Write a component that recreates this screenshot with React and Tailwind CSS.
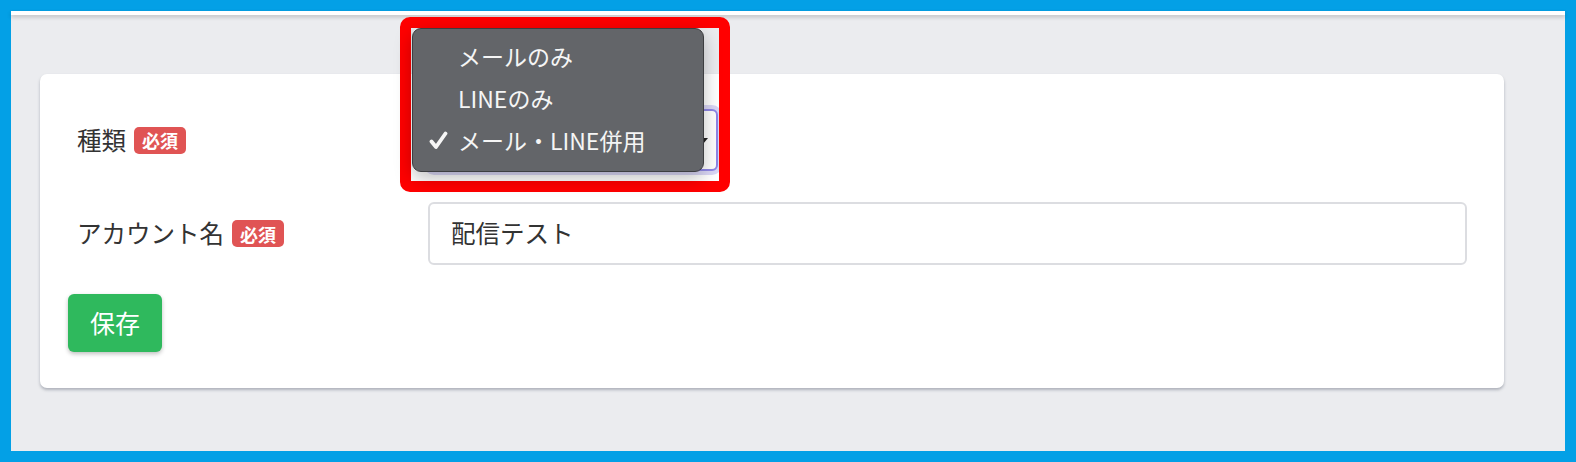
import React from 'react';

const font = { fontFamily: '"Noto Sans CJK JP", "Noto Sans", sans-serif' };

function Badge() {
  return (
    <span className="ml-[8px] inline-flex h-[27px] items-center rounded-[5px] bg-[#e05454] px-[8px] text-[18px] font-bold leading-none text-white">
      必須
    </span>
  );
}

function Dropdown() {
  const items = ['メールのみ', 'LINEのみ', 'メール・LINE併用'];
  return (
    <div className="absolute left-[412px] top-[28px] w-[292px] h-[144px] rounded-[9px] border border-[#3d3e41] bg-[#636569] pt-[6px] shadow-[0_6px_18px_rgba(0,0,0,0.25)]">
      {items.map((t, i) => (
        <div key={t} className="relative flex h-[42px] items-center pl-[45px] text-[23px] text-[#f5f5f5]">
          {i === 2 && (
            <svg className="absolute left-[16px] top-[12px]" width="19" height="19" viewBox="0 0 19 19">
              <path d="M2.5 10.5 L7 16 L16.5 2.5" fill="none" stroke="#f6f6f6" strokeWidth="3.8" strokeLinecap="round" strokeLinejoin="round" />
            </svg>
          )}
          {t}
        </div>
      ))}
    </div>
  );
}

export default function App() {
  return (
    <div className="relative h-[462px] w-[1576px] border-[11px] border-[#03a0e6] bg-[#ebecef] text-[#333]" style={font}>
      <div className="h-[4px] bg-white shadow-[0_2px_4px_rgba(0,0,0,0.2)]" />
      <div className="pl-[29px] pr-[61px] pt-[59px]">
        <div className="rounded-[7px] bg-white pl-[28px] pr-[37px] pt-[35px] pb-[36px] shadow-[0_2px_3px_rgba(60,70,90,0.35)]">
          <div className="flex items-center">
            <div className="flex w-[360px] items-center pl-[9px] text-[24.5px] text-[#333]">
              種類<Badge />
            </div>
            <div className="relative h-[62px] w-[290px] rounded-[6px] border-2 border-[#8f87e6] bg-white shadow-[0_0_0_4px_rgba(150,140,230,0.35)]">
              <span className="absolute right-[8px] top-[27px] h-0 w-0 border-x-[5px] border-t-[6px] border-x-transparent border-t-[#222]" />
            </div>
          </div>
          <div className="mt-[31px] flex items-center">
            <div className="flex w-[360px] items-center pl-[9px] text-[24.5px] text-[#333]">
              アカウント名<Badge />
            </div>
            <div className="flex h-[63px] flex-1 items-center rounded-[6px] border-2 border-[#dcdde1] px-[21px] text-[24.5px] text-[#333]">
              配信テスト
            </div>
          </div>
          <button className="mt-[29px] flex h-[58px] w-[94px] items-center justify-center rounded-[6px] bg-[#2fb95d] text-[25px] text-white shadow-[0_2px_4px_rgba(0,0,0,0.25)]">
            保存
          </button>
        </div>
      </div>
      <div className="pointer-events-none absolute left-[389px] top-[6px] h-[175px] w-[330px] rounded-[10px] border-[11px] border-[#ff0000]" />
      <div className="absolute left-[-11px] top-[-11px]">
        <Dropdown />
      </div>
    </div>
  );
}
